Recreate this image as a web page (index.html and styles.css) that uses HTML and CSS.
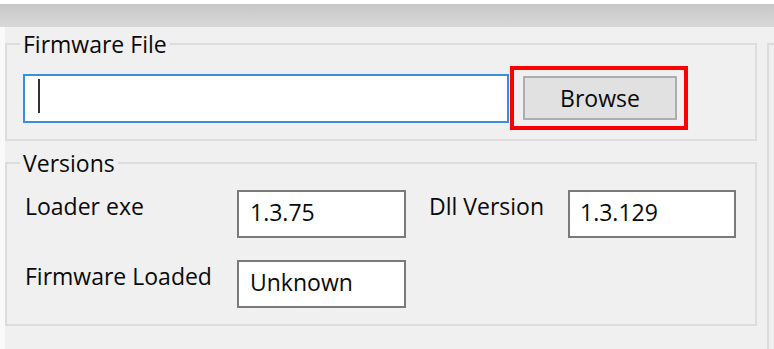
FILE: index.html
```html
<!DOCTYPE html>
<html lang="en">
<head>
    <meta charset="UTF-8">
    <meta name="viewport" content="width=device-width, initial-scale=1.0">
    <title>Firmware Loader</title>
    <link rel="stylesheet" href="styles.css">
</head>
<body>
    <div class="window">
        <div class="titlebar"></div>
        <div class="content">
            <div class="groups">
                <fieldset class="group group-file">
                    <legend>Firmware File</legend>
                    <div class="file-row">
                        <div class="path-box"><span class="caret"></span></div>
                        <div class="highlight">
                            <button type="button" class="browse">Browse</button>
                        </div>
                    </div>
                </fieldset>

                <fieldset class="group group-versions">
                    <legend>Versions</legend>
                    <div class="version-grid">
                        <span class="label">Loader exe</span>
                        <div class="value">1.3.75</div>
                        <span class="label label-dll">Dll Version</span>
                        <div class="value value-dll">1.3.129</div>
                        <span class="label">Firmware Loaded</span>
                        <div class="value">Unknown</div>
                    </div>
                </fieldset>
            </div>
            <div class="side-panel"></div>
        </div>
    </div>
</body>
</html>
```

FILE: styles.css
```css
* {
    box-sizing: border-box;
}

body {
    margin: 0;
    font-family: "Open Sans", "Noto Sans", sans-serif;
    font-size: 23px;
    color: #0A0A0A;
    background-color: #F0F0F0;
}

.window {
    display: flex;
    flex-direction: column;
    height: 100vh;
}

.titlebar {
    height: 27px;
    border-top: 4px solid #FFFFFF;
    background: linear-gradient(#C8C8C8, #D8D8D8);
}

.content {
    flex: 1;
    display: flex;
    border-left: 5px solid #F9F9F9;
}

.groups {
    width: 752px;
}

.group {
    margin: 0;
    border: 2px solid #DCDCDC;
    min-width: 0;
}

legend {
    margin-left: -3px;
    padding: 0 3px;
    line-height: 24px;
}

.group-file {
    margin-top: 5px;
    padding: 10px 16px 9px;
}

.group-versions {
    margin-top: 10px;
    padding: 15px 16px 16px;
}

.file-row {
    display: flex;
    align-items: center;
    gap: 1px;
}

.path-box {
    width: 486px;
    height: 49px;
    padding: 3px 13px;
    background: #FFFFFF;
    border: 2px solid #3B8DE0;
}

.caret {
    display: block;
    width: 2px;
    height: 34px;
    background: #333333;
}

.highlight {
    width: 178px;
    height: 64px;
    padding: 6px 7px 6px 9px;
    border: 4px solid #FF0000;
}

.browse {
    width: 154px;
    height: 44px;
    padding: 0;
    font-family: inherit;
    font-size: 23px;
    color: #0A0A0A;
    background: #E1E1E1;
    border: 2px solid #ADADAD;
}

.version-grid {
    display: grid;
    grid-template-columns: 212px 169px 162px 168px;
    grid-auto-rows: 48px;
    row-gap: 22px;
    margin-left: 2px;
}

.label {
    line-height: 30px;
    margin-top: 1px;
}

.label-dll {
    padding-left: 23px;
}

.value {
    padding: 5px 10px 0 11px;
    line-height: 30px;
    background: #FFFFFF;
    border: 2px solid #7A7A7A;
}

.value-dll {
    padding-left: 10px;
}

.side-panel {
    flex: 1;
    margin: 16px 0 0 10px;
    border-top: 2px solid #DCDCDC;
    border-left: 2px solid #DCDCDC;
}
```
